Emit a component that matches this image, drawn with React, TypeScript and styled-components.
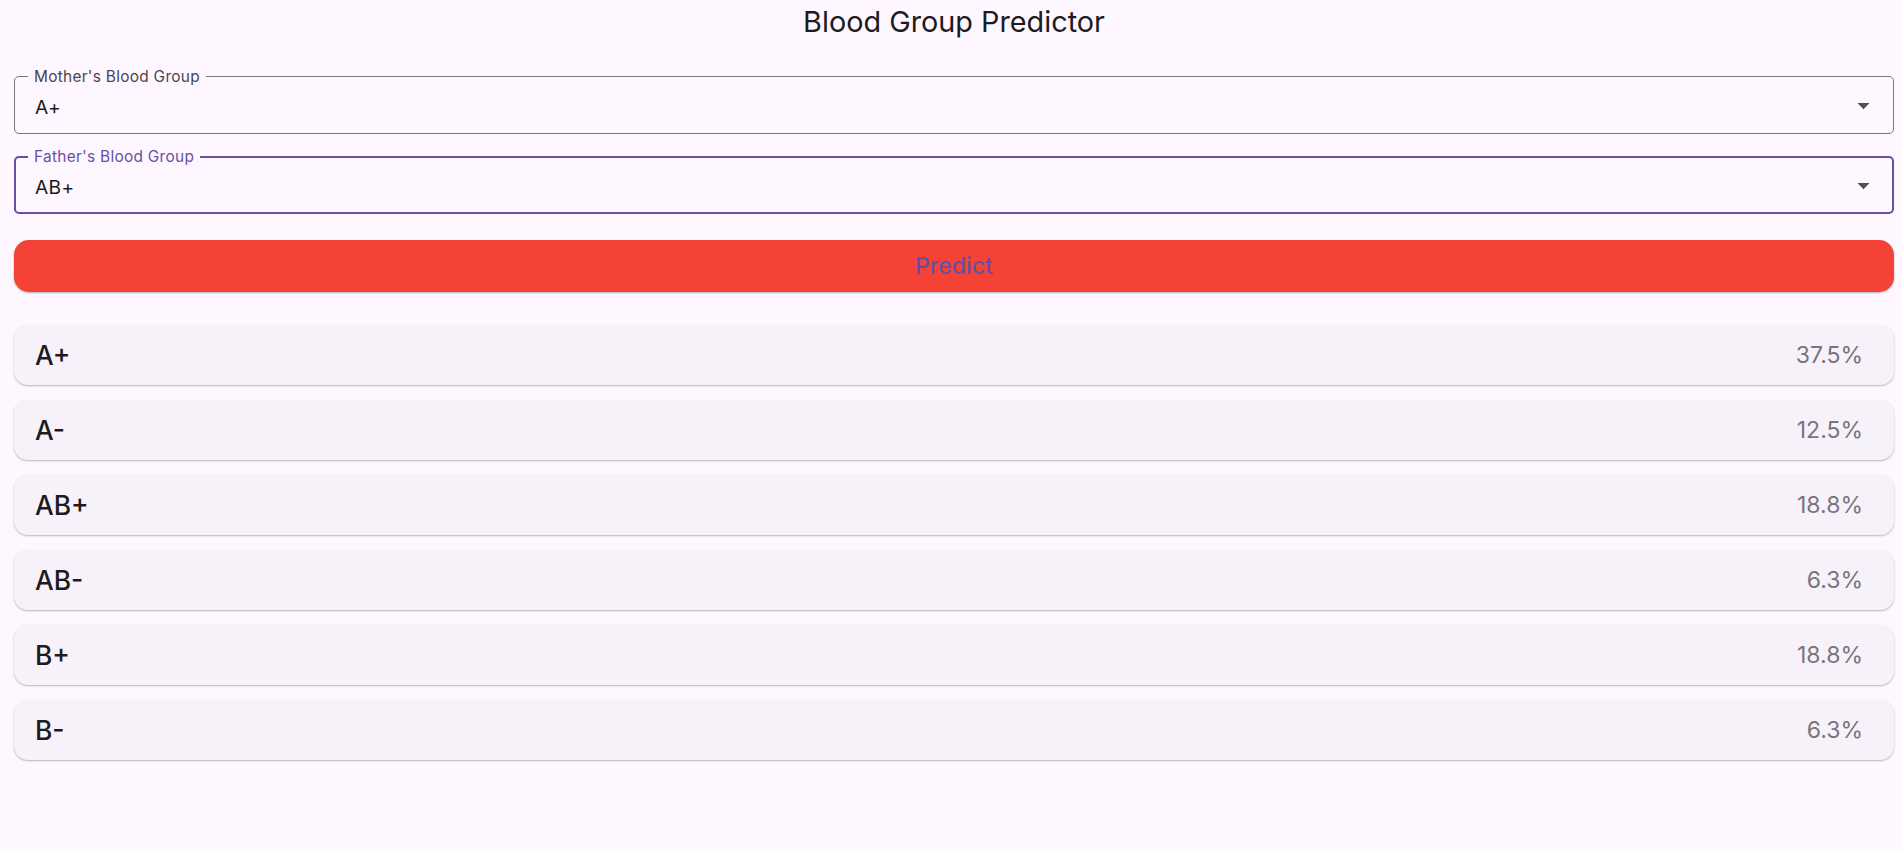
import React from "react";
import styled, { createGlobalStyle } from "styled-components";

const GlobalStyle = createGlobalStyle`
  html, body {
    margin: 0;
    padding: 0;
    background: #fef7ff;
  }
  body {
    font-family: Inter, "Noto Sans", sans-serif;
    color: #1d1b20;
  }
  * {
    box-sizing: border-box;
  }
`;

const Page = styled.main`
  min-height: 851px;
  padding: 0 8px 0 14px;
  display: flex;
  flex-direction: column;
`;

const Title = styled.h1`
  margin: 0 0 32px;
  font-size: 28.8px;
  font-weight: 400;
  line-height: 44px;
  text-align: center;
  color: #1d1b20;
`;

const Form = styled.div`
  display: flex;
  flex-direction: column;
  gap: 22px;
`;

const Field = styled.div<{ $focused?: boolean }>`
  position: relative;
  height: 58px;
  display: flex;
  align-items: center;
  justify-content: space-between;
  border: ${(p) => (p.$focused ? "2px solid #6750a4" : "1px solid #79747e")};
  border-radius: 5px;
  padding: 3px ${(p) => (p.$focused ? 14 : 15)}px 0 ${(p) => (p.$focused ? 19 : 20)}px;
  cursor: pointer;
`;

const FieldLabel = styled.span<{ $focused?: boolean }>`
  position: absolute;
  top: ${(p) => (p.$focused ? -9 : -8.5)}px;
  left: ${(p) => (p.$focused ? 12 : 13)}px;
  padding: 0 6px;
  background: #fef7ff;
  font-size: 15.4px;
  letter-spacing: 0.3px;
  line-height: 16px;
  color: ${(p) => (p.$focused ? "#6750a4" : "#49454f")};
`;

const FieldValue = styled.span`
  font-size: 19.2px;
  letter-spacing: 0.3px;
  line-height: 24px;
  color: #1d1b20;
`;

const Arrow = styled.svg`
  width: 29px;
  height: 29px;
  fill: #4f4f4f;
  margin-top: -3px;
`;

const PredictButton = styled.button`
  margin-top: 26px;
  height: 52px;
  border: none;
  border-radius: 15px;
  background: #f44336;
  color: #6750a4;
  font-family: inherit;
  font-size: 23px;
  font-weight: 500;
  box-shadow: 0 1px 2px rgba(0, 0, 0, 0.3);
  cursor: pointer;
`;

const Results = styled.ul`
  list-style: none;
  margin: 33px 0 0;
  padding: 0;
  display: flex;
  flex-direction: column;
  gap: 15px;
`;

const ResultCard = styled.li`
  height: 60px;
  display: flex;
  align-items: center;
  justify-content: space-between;
  padding: 0 31px 0 21px;
  border-radius: 14px;
  background: #f7f2fa;
  box-shadow: 0 1px 2px rgba(0, 0, 0, 0.28);
`;

const GroupName = styled.span`
  font-size: 26.4px;
  font-weight: 500;
  color: #1d1b20;
`;

const Percent = styled.span`
  font-size: 23px;
  font-weight: 400;
  color: #79747e;
`;

const DropArrow = () => (
  <Arrow viewBox="0 0 24 24" aria-hidden="true">
    <path d="M7 10l5 5 5-5z" />
  </Arrow>
);

const results = [
  { group: "A+", pct: "37.5%" },
  { group: "A-", pct: "12.5%" },
  { group: "AB+", pct: "18.8%" },
  { group: "AB-", pct: "6.3%" },
  { group: "B+", pct: "18.8%" },
  { group: "B-", pct: "6.3%" },
];

export default function App() {
  return (
    <>
      <GlobalStyle />
      <Page>
        <Title>Blood Group Predictor</Title>
        <Form>
          <Field>
            <FieldLabel>Mother's Blood Group</FieldLabel>
            <FieldValue>A+</FieldValue>
            <DropArrow />
          </Field>
          <Field $focused>
            <FieldLabel $focused>Father's Blood Group</FieldLabel>
            <FieldValue>AB+</FieldValue>
            <DropArrow />
          </Field>
        </Form>
        <PredictButton>Predict</PredictButton>
        <Results>
          {results.map((r) => (
            <ResultCard key={r.group}>
              <GroupName>{r.group}</GroupName>
              <Percent>{r.pct}</Percent>
            </ResultCard>
          ))}
        </Results>
      </Page>
    </>
  );
}
